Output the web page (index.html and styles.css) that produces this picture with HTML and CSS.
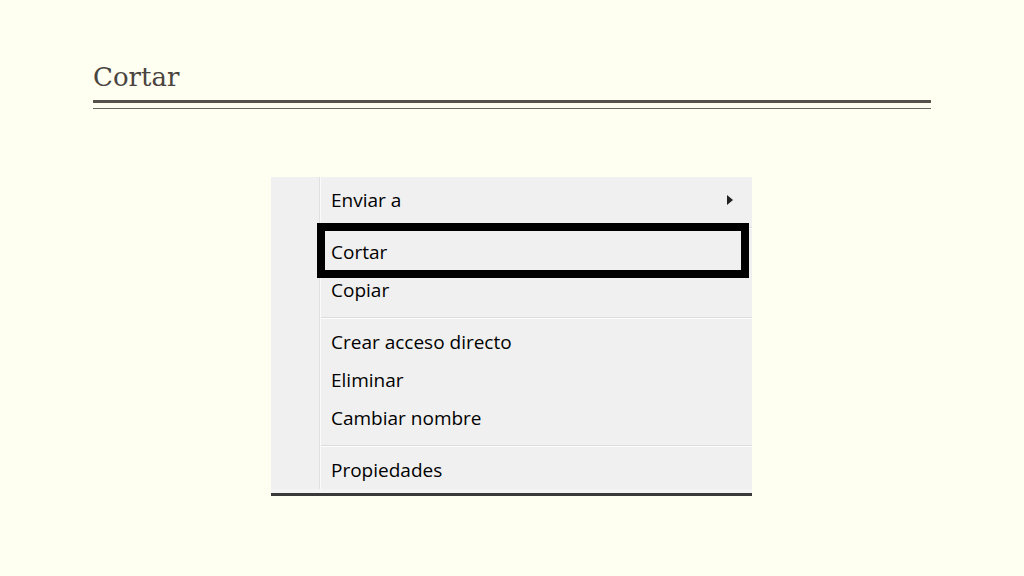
FILE: index.html
```html
<!DOCTYPE html>
<html lang="es">
<head>
<meta charset="utf-8">
<title>Cortar</title>
<link rel="stylesheet" href="styles.css">
</head>
<body>
<div class="slide">
  <header class="slide-header">
    <h1 class="slide-title">Cortar</h1>
    <div class="rule-thick"></div>
    <div class="rule-thin"></div>
  </header>
  <div class="menu">
    <div class="menu-body">
      <div class="gutter"></div>
      <ul class="items">
        <li class="item item-sub">Enviar a<span class="arrow"></span></li>
        <li class="sep"></li>
        <li class="item">Cortar</li>
        <li class="item">Copiar</li>
        <li class="sep"></li>
        <li class="item">Crear acceso directo</li>
        <li class="item">Eliminar</li>
        <li class="item">Cambiar nombre</li>
        <li class="sep"></li>
        <li class="item">Propiedades</li>
      </ul>
    </div>
    <div class="menu-foot"></div>
    <div class="highlight"></div>
  </div>
</div>
</body>
</html>
```
FILE: styles.css
```css
html, body {
  margin: 0;
  padding: 0;
  background: #fefef1;
}
.slide {
  width: 1024px;
  height: 576px;
  display: flex;
  flex-direction: column;
  align-items: center;
}
.slide-header {
  width: 838px;
  padding-top: 62px;
}
.slide-title {
  margin: 0;
  font-family: "DejaVu Serif", "Liberation Serif", serif;
  font-weight: normal;
  font-size: 26px;
  line-height: 30px;
  color: #4a453f;
  height: 38px;
}
.rule-thick {
  height: 3px;
  background: #56514b;
}
.rule-thin {
  height: 1px;
  margin-top: 5px;
  background: #6a655f;
}
.menu {
  position: relative;
  margin-top: 68px;
  margin-right: 1px;
  width: 481px;
  background: #f0f0f0;
  font-family: "Open Sans", "Noto Sans", sans-serif;
  font-size: 19px;
  color: #000;
}
.menu-body {
  display: flex;
}
.gutter {
  width: 48px;
  border-right: 1px solid #e0e0e0;
  box-shadow: 1px 0 0 #fbfbfb;
}
.items {
  list-style: none;
  margin: 0;
  padding: 4px 0 0 1px;
  flex: 1;
}
.item {
  height: 38px;
  line-height: 38px;
  padding-left: 10px;
  position: relative;
}
.item-sub .arrow {
  position: absolute;
  right: 19px;
  top: 14px;
  width: 0;
  height: 0;
  border-top: 5px solid transparent;
  border-bottom: 5px solid transparent;
  border-left: 6px solid #222;
}
.sep {
  height: 14px;
  padding-top: 8px;
  box-sizing: border-box;
}
.sep::before {
  content: "";
  display: block;
  height: 1px;
  background: #dcdcdc;
  border-bottom: 1px solid #fdfdfd;
}
.menu-foot {
  height: 4px;
  background: #f4f4f4;
  border-bottom: 3px solid #3a3a3a;
}
.highlight {
  position: absolute;
  left: 46px;
  top: 46px;
  width: 432px;
  height: 55px;
  box-sizing: border-box;
  border: 8px solid #000;
}
```
